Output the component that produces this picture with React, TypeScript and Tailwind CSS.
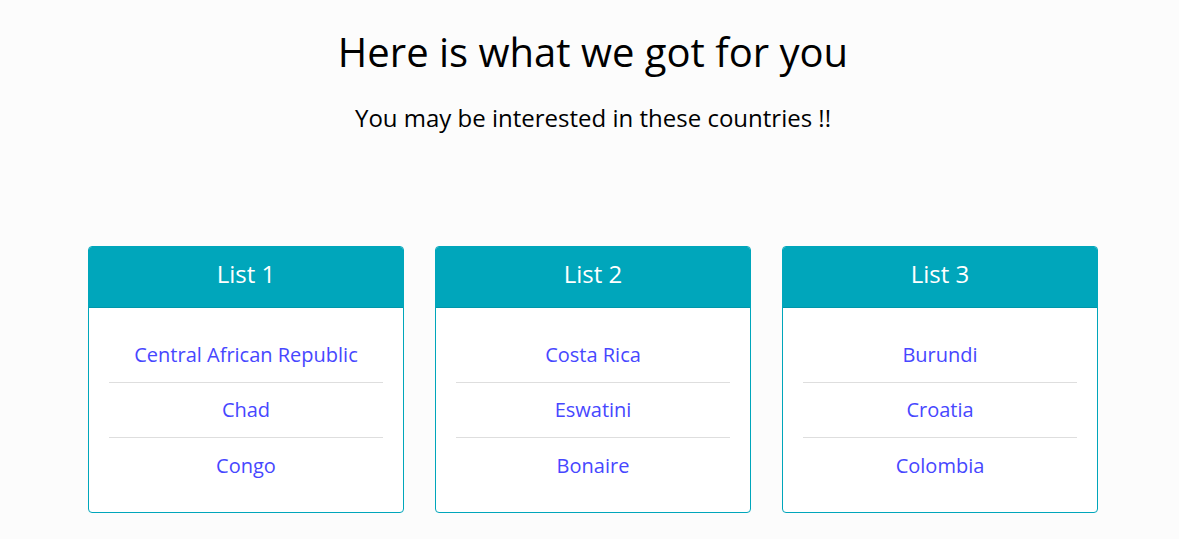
const lists = [
  { title: "List 1", items: ["Central African Republic", "Chad", "Congo"] },
  { title: "List 2", items: ["Costa Rica", "Eswatini", "Bonaire"] },
  { title: "List 3", items: ["Burundi", "Croatia", "Colombia"] },
];

export default function App() {
  return (
    <div className="min-h-[539px] bg-[#fcfcfc] pl-[7px] text-black font-['Open_Sans',sans-serif]">
      <div className="pt-[26px] text-center">
        <h1 className="text-[40px] leading-[52px]">Here is what we got for you</h1>
        <p className="mt-[26px] text-[24px] leading-[28px]">You may be interested in these countries !!</p>
      </div>

      <div className="mx-auto mt-[114px] grid w-[1010px] grid-cols-3 gap-[31px]">
        {lists.map((list) => (
          <div key={list.title} className="overflow-hidden rounded border border-[#00a6bb] bg-white">
            <div className="flex h-[61px] items-center justify-center border-b border-[#0096aa] bg-[#00a6bb] pb-[7px] text-[24px] text-white">
              {list.title}
            </div>
            <ul className="mx-5 pt-5 pb-[19px]">
              {list.items.map((name, i) => (
                <li
                  key={name}
                  className={
                    "flex h-[55px] items-center justify-center text-[20px] text-[#4747ff] " +
                    (i < list.items.length - 1 ? "border-b border-[#dedede]" : "")
                  }
                >
                  {name}
                </li>
              ))}
            </ul>
          </div>
        ))}
      </div>
    </div>
  );
}
